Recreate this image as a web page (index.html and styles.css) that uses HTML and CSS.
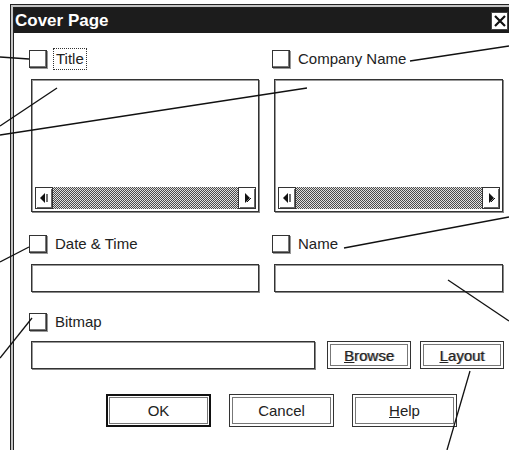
FILE: index.html
```html
<!DOCTYPE html>
<html lang="en">
<head>
  <meta charset="UTF-8" />
  <title>Cover Page</title>
  <link rel="stylesheet" href="styles.css">
</head>
<body>
  <div class="dialog">
    <div class="frame">
      <div class="titlebar">
        <span class="title">Cover Page</span>
        <span class="close">
          <svg width="12" height="12" viewBox="0 0 12 12"><path d="M1 1 L11 11 M11 1 L1 11" stroke="#111" stroke-width="2.2" fill="none"/></svg>
        </span>
      </div>

      <div class="content">
        <div class="columns">
          <div class="col">
            <label class="check"><span class="box"></span><span class="focus">Title</span></label>
            <div class="listbox">
              <div class="area"></div>
              <div class="hscroll">
                <span class="arrow">
                  <svg width="10" height="12" viewBox="0 0 10 12"><path d="M6 1 L1 6 L6 11 Z" fill="#111"/><path d="M8 2 V10" stroke="#111" stroke-width="1.2"/></svg>
                </span>
                <span class="track"></span>
                <span class="arrow">
                  <svg width="10" height="12" viewBox="0 0 10 12"><path d="M3 1 L8 6 L3 11 Z" fill="#111"/><path d="M5 10 L9 6" stroke="#111" stroke-width="1"/></svg>
                </span>
              </div>
            </div>
            <label class="check gap-top"><span class="box"></span>Date &amp; Time</label>
            <div class="field"></div>
          </div>

          <div class="col">
            <label class="check"><span class="box"></span>Company Name</label>
            <div class="listbox">
              <div class="area"></div>
              <div class="hscroll">
                <span class="arrow">
                  <svg width="10" height="12" viewBox="0 0 10 12"><path d="M6 1 L1 6 L6 11 Z" fill="#111"/><path d="M8 2 V10" stroke="#111" stroke-width="1.2"/></svg>
                </span>
                <span class="track"></span>
                <span class="arrow">
                  <svg width="10" height="12" viewBox="0 0 10 12"><path d="M3 1 L8 6 L3 11 Z" fill="#111"/><path d="M5 10 L9 6" stroke="#111" stroke-width="1"/></svg>
                </span>
              </div>
            </div>
            <label class="check gap-top"><span class="box"></span>Name</label>
            <div class="field"></div>
          </div>
        </div>

        <label class="check bitmap"><span class="box"></span>Bitmap</label>
        <div class="bitmap-row">
          <div class="field path"></div>
          <button class="btn small etched"><u>B</u>rowse</button>
          <button class="btn small etched"><u>L</u>ayout</button>
        </div>

        <div class="actions">
          <button class="btn default">OK</button>
          <button class="btn">Cancel</button>
          <button class="btn"><u>H</u>elp</button>
        </div>
      </div>
    </div>
  </div>

  <svg class="callouts" width="509" height="450" viewBox="0 0 509 450">
    <g stroke="#111" stroke-width="1.3" fill="none">
      <line x1="0" y1="57" x2="29" y2="59"/>
      <line x1="0" y1="126" x2="57" y2="88"/>
      <line x1="0" y1="135" x2="307" y2="88"/>
      <line x1="410" y1="61" x2="509" y2="46"/>
      <line x1="344" y1="248" x2="509" y2="217"/>
      <line x1="448" y1="280" x2="509" y2="321"/>
      <line x1="0" y1="262" x2="29" y2="247"/>
      <line x1="0" y1="358" x2="32" y2="318"/>
      <line x1="470" y1="371" x2="447" y2="450"/>
    </g>
  </svg>
</body>
</html>
```

FILE: styles.css
```css
body {
  margin: 0;
  width: 509px;
  height: 450px;
  overflow: hidden;
  background: #fff;
  color: #222;
  font-family: "Liberation Sans", Arial, sans-serif;
  font-size: 15px;
  position: relative;
}

.dialog {
  margin: 4px 0 0 10px;
  width: 520px;
  height: 460px;
  border-left: 1px solid #222;
  border-top: 1px solid #222;
  padding: 2px 0 0 2px;
  background: #c4c4c4;
}

.frame {
  height: 100%;
  border-left: 1px solid #222;
  border-top: 1px solid #222;
  background: #fff;
}

.titlebar {
  height: 25px;
  background: #1c1c1c;
  display: flex;
  align-items: center;
  justify-content: space-between;
}

.title {
  color: #fff;
  font-weight: bold;
  font-size: 17px;
  line-height: 25px;
  padding-left: 1px;
}

.close {
  width: 15px;
  height: 16px;
  margin-right: 25px;
  background: #fff;
  border: 1px solid #444;
  display: flex;
  align-items: center;
  justify-content: center;
}

.content {
  padding: 16px 0 0 17px;
}

.columns {
  display: grid;
  grid-template-columns: 228px 229px;
  column-gap: 15px;
}

.col {
  display: flex;
  flex-direction: column;
}

.check {
  display: flex;
  align-items: center;
  gap: 8px;
  height: 20px;
  margin-left: -2px;
  line-height: 18px;
}

.check.gap-top {
  margin-top: 22px;
}

.check.bitmap {
  margin-top: 20px;
}

.box {
  width: 16px;
  height: 16px;
  border: 1px solid #333;
  box-shadow: inset -1px -1px 0 #777, 1px 1px 0 #999;
  background: #fff;
}

.focus {
  outline: 1px dotted #333;
  outline-offset: 1px;
  padding: 0 1px;
}

.listbox {
  margin-top: 10px;
  height: 127px;
  border: 1px solid #333;
  box-shadow: inset 1px 1px 0 #999, 1px 1px 0 #888;
  padding: 2px 2px 2px 3px;
  display: flex;
  flex-direction: column;
}

.area {
  flex: 1;
}

.hscroll {
  height: 22px;
  display: flex;
}

.arrow {
  width: 16px;
  border: 1px solid #333;
  box-shadow: inset 1px 1px 0 #fff, inset -1px -1px 0 #666;
  background: #fff;
  display: flex;
  align-items: center;
  justify-content: center;
}

.track {
  flex: 1;
  background: repeating-conic-gradient(#4a4a4a 0 25%, #e0e0e0 0 50%) 0 0 / 2px 2px;
}

.field {
  margin-top: 10px;
  height: 26px;
  border: 1px solid #333;
  box-shadow: inset 1px 1px 0 #999, 1px 1px 0 #888;
}

.bitmap-row {
  display: flex;
  align-items: flex-start;
  margin-top: 9px;
}

.field.path {
  margin-top: 0;
  width: 282px;
  margin-right: 12px;
}

.btn {
  font-family: "Liberation Sans", Arial, sans-serif;
  font-size: 15px;
  color: #222;
  background: #fff;
  border: 1px solid #333;
  box-shadow: inset 0 0 0 2px #fff, inset 0 0 0 3px #777;
  padding: 0;
}

.btn.small {
  width: 84px;
  height: 28px;
  margin-right: 9px;
}

.etched {
  text-shadow: 1px 0 0 #999;
}

.actions {
  display: flex;
  gap: 18px;
  margin: 25px 0 0 75px;
}

.actions .btn {
  width: 105px;
  height: 33px;
}

.btn.default {
  border: 2px solid #111;
  box-shadow: inset 0 0 0 1px #fff, inset 0 0 0 2px #777;
}

.callouts {
  position: absolute;
  left: 0;
  top: 0;
  pointer-events: none;
}
```
